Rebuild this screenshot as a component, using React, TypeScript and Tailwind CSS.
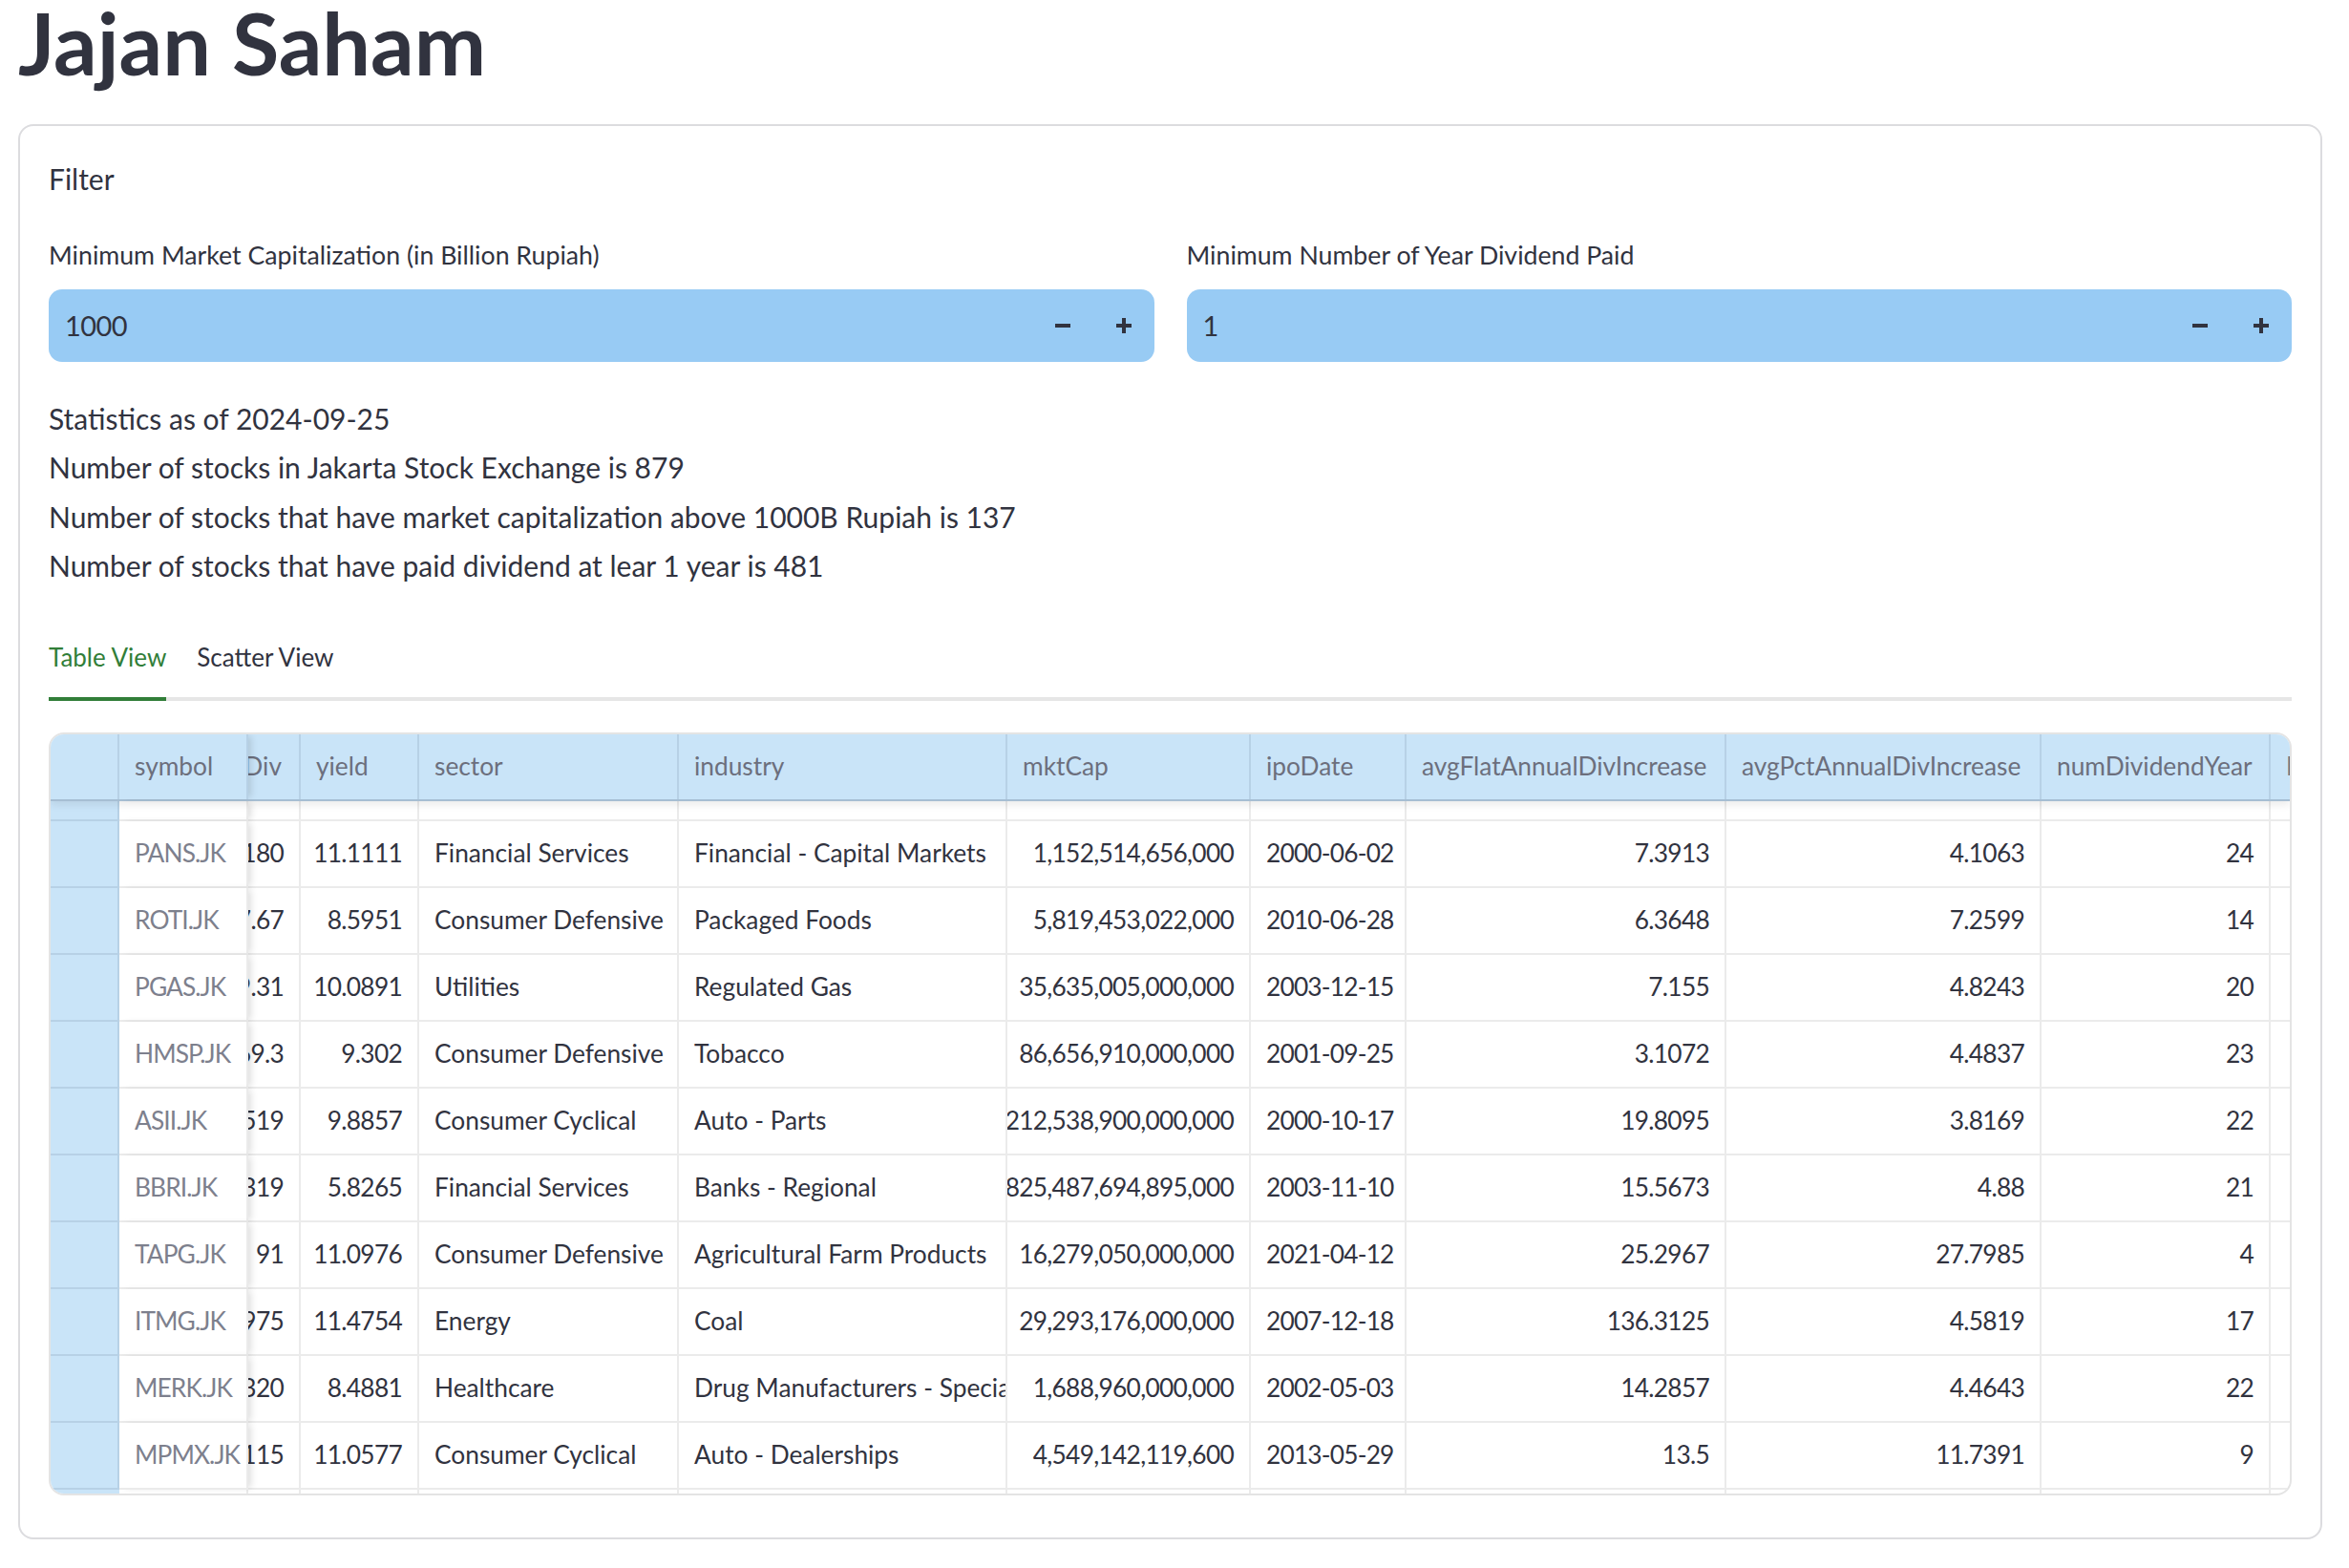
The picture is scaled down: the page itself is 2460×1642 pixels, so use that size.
import { Fragment } from "react";

const ROWS = [
  { symbol: "PANS.JK", div: "180", yld: "11.1111", sector: "Financial Services", industry: "Financial - Capital Markets", cap: "1,152,514,656,000", ipo: "2000-06-02", flat: "7.3913", pct: "4.1063", years: "24" },
  { symbol: "ROTI.JK", div: "87.67", yld: "8.5951", sector: "Consumer Defensive", industry: "Packaged Foods", cap: "5,819,453,022,000", ipo: "2010-06-28", flat: "6.3648", pct: "7.2599", years: "14" },
  { symbol: "PGAS.JK", div: "159.31", yld: "10.0891", sector: "Utilities", industry: "Regulated Gas", cap: "35,635,005,000,000", ipo: "2003-12-15", flat: "7.155", pct: "4.8243", years: "20" },
  { symbol: "HMSP.JK", div: "69.3", yld: "9.302", sector: "Consumer Defensive", industry: "Tobacco", cap: "86,656,910,000,000", ipo: "2001-09-25", flat: "3.1072", pct: "4.4837", years: "23" },
  { symbol: "ASII.JK", div: "519", yld: "9.8857", sector: "Consumer Cyclical", industry: "Auto - Parts", cap: "212,538,900,000,000", ipo: "2000-10-17", flat: "19.8095", pct: "3.8169", years: "22" },
  { symbol: "BBRI.JK", div: "319", yld: "5.8265", sector: "Financial Services", industry: "Banks - Regional", cap: "825,487,694,895,000", ipo: "2003-11-10", flat: "15.5673", pct: "4.88", years: "21" },
  { symbol: "TAPG.JK", div: "91", yld: "11.0976", sector: "Consumer Defensive", industry: "Agricultural Farm Products", cap: "16,279,050,000,000", ipo: "2021-04-12", flat: "25.2967", pct: "27.7985", years: "4" },
  { symbol: "ITMG.JK", div: "2975", yld: "11.4754", sector: "Energy", industry: "Coal", cap: "29,293,176,000,000", ipo: "2007-12-18", flat: "136.3125", pct: "4.5819", years: "17" },
  { symbol: "MERK.JK", div: "320", yld: "8.4881", sector: "Healthcare", industry: "Drug Manufacturers - Specialty & Generic", cap: "1,688,960,000,000", ipo: "2002-05-03", flat: "14.2857", pct: "4.4643", years: "22" },
  { symbol: "MPMX.JK", div: "115", yld: "11.0577", sector: "Consumer Cyclical", industry: "Auto - Dealerships", cap: "4,549,142,119,600", ipo: "2013-05-29", flat: "13.5", pct: "11.7391", years: "9" },
];

// fixed column widths, the table is scrolled so "lastDiv" sits half under the sticky symbol column
const GRID = "grid grid-cols-[72px_135px_55px_124px_272px_344px_255px_163px_335px_330px_240px_200px]";

const HEAD = ["symbol", "lastDiv", "yield", "sector", "industry", "mktCap", "ipoDate", "avgFlatAnnualDivIncrease", "avgPctAnnualDivIncrease", "numDividendYear", "DivHistory"];

function Stepper({ value }: { value: string }) {
  return (
    <div className="flex h-[76px] items-center rounded-[14px] bg-[#98CBF4]">
      <span className="flex-1 pl-[17px] text-[29px] tracking-[-0.6px]">{value}</span>
      <button className="flex h-full w-[64px] items-center justify-center">
        <svg width="16" height="16" viewBox="0 0 16 16">
          <rect x="0" y="6" width="16" height="4" fill="#31333F" />
        </svg>
      </button>
      <button className="flex h-full w-[64px] items-center justify-center">
        <svg width="16" height="16" viewBox="0 0 16 16">
          <rect x="0" y="6" width="16" height="4" fill="#31333F" />
          <rect x="6" y="0" width="4" height="16" fill="#31333F" />
        </svg>
      </button>
    </div>
  );
}

function HeadCell({ label, i }: { label: string; i: number }) {
  if (i === 1) {
    return (
      <div className="relative z-10 flex items-center border-r-2 border-[#b7d1e6] px-[16px] text-[#6c6f7d] shadow-[5px_0_7px_-2px_rgba(0,0,0,0.13)]">
        {label}
      </div>
    );
  }
  if (i === 2) {
    return (
      <div className="flex items-center justify-end overflow-hidden whitespace-nowrap border-r-2 border-[#b7d1e6] pr-[18px] text-[#6c6f7d]">
        {label}
      </div>
    );
  }
  return (
    <div className="flex items-center overflow-hidden whitespace-nowrap border-r-2 border-[#b7d1e6] px-[16px] text-[#6c6f7d]">
      {label}
    </div>
  );
}

function Cell({ children, right, tight }: { children?: React.ReactNode; right?: boolean; tight?: boolean }) {
  return (
    <div
      className={
        right
          ? "flex items-center justify-end overflow-hidden whitespace-nowrap border-b-2 border-r-2 border-[#ebebeb] px-[16px] tracking-[-0.7px]"
          : tight
            ? "flex items-center overflow-hidden whitespace-nowrap border-b-2 border-r-2 border-[#ebebeb] px-[16px] tracking-[-0.8px]"
            : "flex items-center overflow-hidden whitespace-nowrap border-b-2 border-r-2 border-[#ebebeb] px-[16px]"
      }
    >
      {children}
    </div>
  );
}

function SymbolCell({ children }: { children?: React.ReactNode }) {
  return (
    <div className="relative z-10 flex items-center overflow-hidden whitespace-nowrap border-b-2 border-r-2 border-[#ebebeb] bg-white px-[16px] tracking-[-0.9px] text-[#7d808d] shadow-[5px_0_7px_-2px_rgba(0,0,0,0.13)]">
      {children}
    </div>
  );
}

function IndexCell() {
  return <div className="border-b-2 border-r-2 border-[#b7d1e6] bg-[#C9E4F8]" />;
}

export default function App() {
  return (
    <div className="min-h-screen bg-white pl-[19px] pr-[28px] font-['Lato',sans-serif] text-[#31333F]">
      <h1 className="text-[90px] font-bold leading-[88px]">Jajan Saham</h1>

      <div className="mt-[42px] rounded-[16px] border-2 border-[#dcdcdf] px-[30px] pb-[44px] pt-[30px]">
        <p className="text-[30px] leading-[51px]">Filter</p>

        <div className="mt-[32px] grid grid-cols-2 gap-[34px]">
          <div>
            <p className="mb-[13px] text-[26.7px] leading-[45px]">Minimum Market Capitalization (in Billion Rupiah)</p>
            <Stepper value="1000" />
          </div>
          <div>
            <p className="mb-[13px] text-[26.7px] leading-[45px]">Minimum Number of Year Dividend Paid</p>
            <Stepper value="1" />
          </div>
        </div>

        <div className="mt-[34px] text-[30px] leading-[51.3px]">
          <p>Statistics as of 2024-09-25</p>
          <p>Number of stocks in Jakarta Stock Exchange is 879</p>
          <p>Number of stocks that have market capitalization above 1000B Rupiah is 137</p>
          <p>Number of stocks that have paid dividend at lear 1 year is 481</p>
        </div>

        <div className="mt-[32px] flex gap-[32px] border-b-4 border-[#e6e6e6] text-[26px]">
          <button className="-mb-[4px] h-[84px] border-b-4 border-[#317E38] pb-[4px] text-[#317E38]">Table View</button>
          <button className="-mb-[4px] h-[84px] border-b-4 border-transparent pb-[4px]">Scatter View</button>
        </div>

        <div className="mt-[33px] overflow-hidden rounded-[16px] border-2 border-[#e4e4e4] text-[26.3px]">
          <div className={`${GRID} relative z-20 h-[70px] border-b-2 border-[#a6bed3] bg-[#C9E4F8] shadow-[0_4px_8px_rgba(0,0,0,0.08)]`}>
            <div className="border-r-2 border-[#b7d1e6]" />
            {HEAD.map((h, i) => (
              <HeadCell key={h} label={h} i={i + 1} />
            ))}
          </div>

          <div className={`${GRID} h-[21px]`}>
            <IndexCell />
            <SymbolCell />
            {HEAD.slice(1).map((h) => (
              <Cell key={h} />
            ))}
          </div>

          {ROWS.map((r) => (
            <div key={r.symbol} className={`${GRID} h-[70px]`}>
              <IndexCell />
              <SymbolCell>{r.symbol}</SymbolCell>
              <Cell right>{r.div}</Cell>
              <Cell right>{r.yld}</Cell>
              <Cell>{r.sector}</Cell>
              <Cell>{r.industry}</Cell>
              <Cell right>{r.cap}</Cell>
              <Cell tight>{r.ipo}</Cell>
              <Cell right>{r.flat}</Cell>
              <Cell right>{r.pct}</Cell>
              <Cell right>{r.years}</Cell>
              <Cell />
            </div>
          ))}

          <div className={`${GRID} h-[4px]`}>
            {HEAD.concat(["x"]).map((h) => (
              <Fragment key={h}>
                <div className={h === "symbol" ? "bg-[#C9E4F8]" : "border-r-2 border-[#ebebeb]"} />
              </Fragment>
            ))}
          </div>
        </div>
      </div>
    </div>
  );
}
